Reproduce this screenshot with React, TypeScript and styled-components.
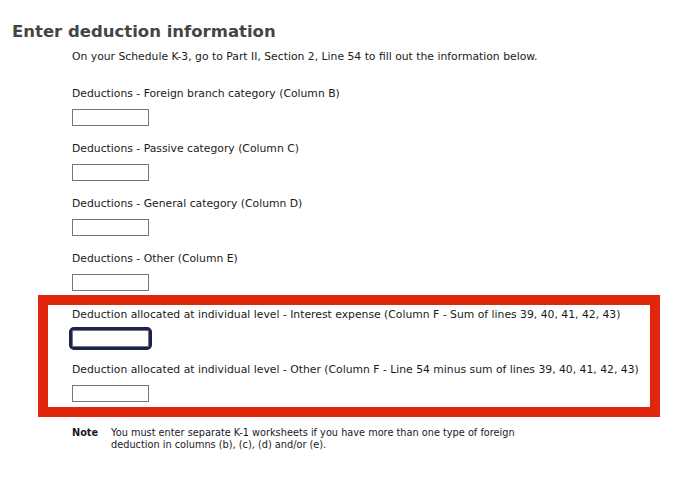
import styled, { createGlobalStyle } from "styled-components";

const GlobalStyle = createGlobalStyle`
  html, body {
    margin: 0;
    padding: 0;
    background: #ffffff;
  }
  body {
    font-family: "DejaVu Sans", "Liberation Sans", sans-serif;
    color: #1a1a1a;
  }
`;

const Page = styled.div`
  padding: 21px 0 30px 12px;
`;

const Heading = styled.h1`
  margin: 0;
  font-size: 16.5px;
  line-height: 22px;
  font-weight: bold;
  color: #454545;
`;

const Content = styled.div`
  padding-left: 60px;
`;

const Intro = styled.p`
  margin: 7px 0 0;
  font-size: 10.8px;
  line-height: 14px;
`;

const Field = styled.div<{ $gap: number }>`
  display: flex;
  flex-direction: column;
  align-items: flex-start;
  margin-top: ${(p) => p.$gap}px;
`;

const Label = styled.label`
  font-size: 10.8px;
  line-height: 14px;
`;

const Input = styled.input<{ $focused?: boolean }>`
  box-sizing: border-box;
  width: 77px;
  height: 17px;
  margin: 8px 0 0;
  padding: 0 3px;
  border: 1px solid #767676;
  border-radius: ${(p) => (p.$focused ? "2px" : "0")};
  background: #fff;
  font: inherit;
  outline: ${(p) => (p.$focused ? "3px solid #1c2150" : "none")};
  outline-offset: 0;
`;

const Highlight = styled.div`
  box-sizing: border-box;
  width: 622px;
  margin: 4px 0 0 -34px;
  padding: 3px 0 5px 24px;
  border: 10px solid #e0270c;
`;

const Note = styled.div`
  display: grid;
  grid-template-columns: 39px 420px;
  margin-top: 10px;
  font-size: 9.75px;
  line-height: 12px;
`;

const NoteTag = styled.span`
  font-weight: bold;
`;

const fields = [
  "Deductions - Foreign branch category (Column B)",
  "Deductions - Passive category (Column C)",
  "Deductions - General category (Column D)",
  "Deductions - Other (Column E)",
];

const allocated = [
  "Deduction allocated at individual level - Interest expense (Column F - Sum of lines 39, 40, 41, 42, 43)",
  "Deduction allocated at individual level - Other (Column F - Line 54 minus sum of lines 39, 40, 41, 42, 43)",
];

export default function App() {
  return (
    <>
      <GlobalStyle />
      <Page>
        <Heading>Enter deduction information</Heading>
        <Content>
          <Intro>
            On your Schedule K-3, go to Part II, Section 2, Line 54 to fill out
            the information below.
          </Intro>
          {fields.map((f, i) => (
            <Field key={f} $gap={i === 0 ? 23 : 16}>
              <Label>{f}</Label>
              <Input type="text" />
            </Field>
          ))}
          <Highlight>
            {allocated.map((f, i) => (
              <Field key={f} $gap={i === 0 ? 0 : 16}>
                <Label>{f}</Label>
                <Input type="text" $focused={i === 0} />
              </Field>
            ))}
          </Highlight>
          <Note>
            <NoteTag>Note</NoteTag>
            <span>
              You must enter separate K-1 worksheets if you have more than one
              type of foreign deduction in columns (b), (c), (d) and/or (e).
            </span>
          </Note>
        </Content>
      </Page>
    </>
  );
}
